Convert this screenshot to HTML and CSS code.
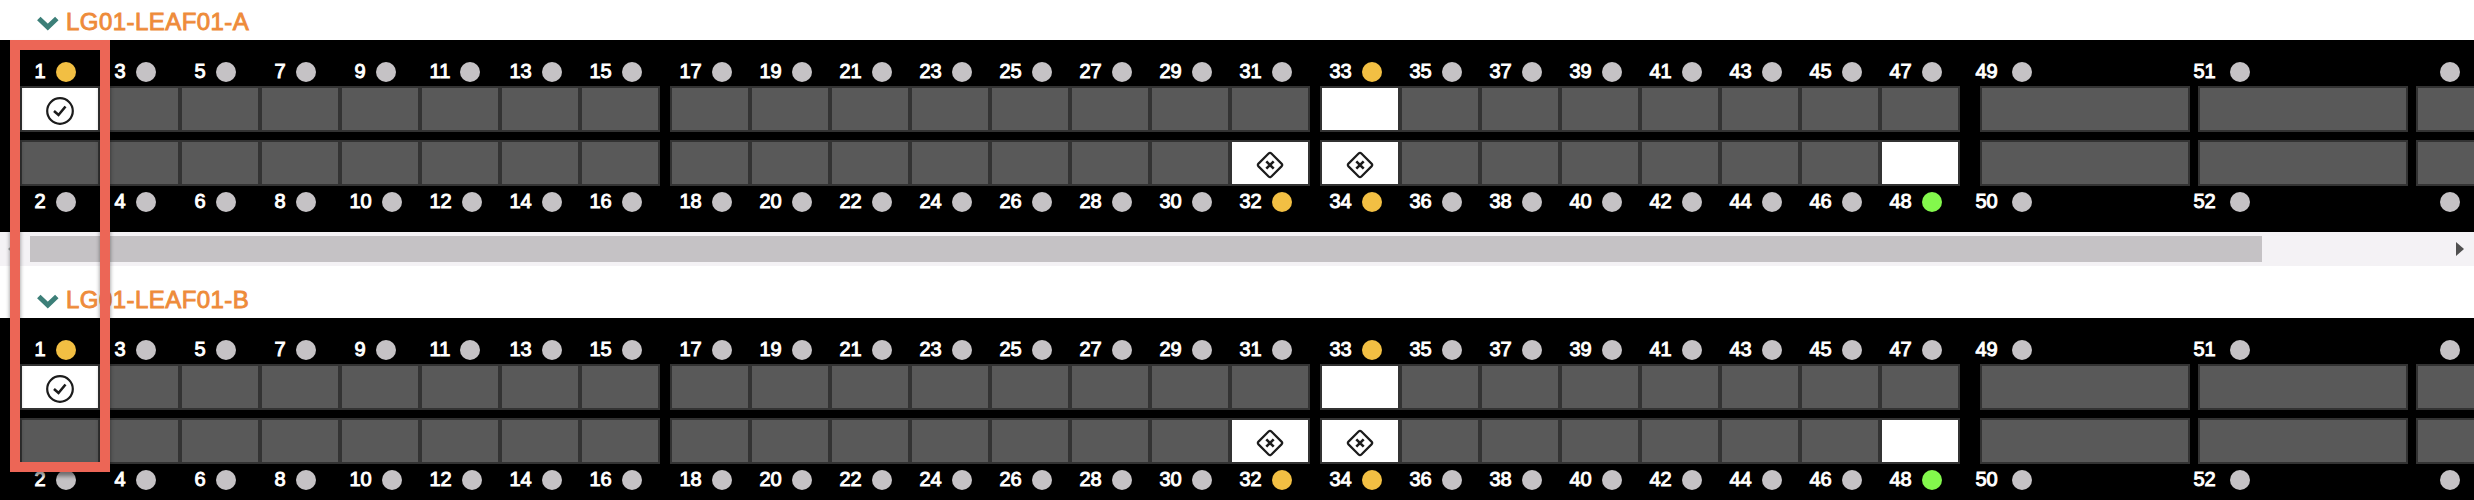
FILE: index.html
```html
<!DOCTYPE html>
<html lang="en">
<head>
<meta charset="utf-8">
<title>Leaf switch ports</title>
<link rel="stylesheet" href="styles.css">
</head>
<body>
<main class="page">
  <section class="switch">
    <header class="switch-title">
      <svg class="chevron" width="22" height="16" viewBox="0 0 22 16"><path d="M1.8 2.5l9 8.5 9-8.5"/></svg>
      <h2 class="switch-name">LG01-LEAF01-A</h2>
    </header>
    <div class="chassis"></div>
    <div class="scrollbar"><i class="arrow-left"></i><div class="thumb"></div><i class="arrow-right"></i></div>
  </section>
  <section class="switch">
    <header class="switch-title">
      <svg class="chevron" width="22" height="16" viewBox="0 0 22 16"><path d="M1.8 2.5l9 8.5 9-8.5"/></svg>
      <h2 class="switch-name">LG01-LEAF01-B</h2>
    </header>
    <div class="chassis"></div>
  </section>
  <div class="highlight"></div>
</main>
<script src="ports.js"></script>
</body>
</html>
```

FILE: styles.css
```css
* { box-sizing: border-box; }
body { margin: 0; background: #fff; font-family: "Liberation Sans", Arial, sans-serif; }
.page { position: relative; width: 2474px; height: 500px; overflow: hidden; }
.switch-title { display: flex; align-items: flex-start; height: 40px; padding: 8px 0 0 37px; }
.switch + .switch .switch-title { height: 52px; padding-top: 20px; }
.chevron { flex: none; margin: 8px 7px 0 0; fill: none; stroke: #3c7f78; stroke-width: 5; }
.switch-name { margin: 0; font-size: 24px; line-height: 28px; font-weight: 400; color: #ee8b3a; letter-spacing: 0.45px; -webkit-text-stroke: 0.9px #ee8b3a; }
.chassis { display: flex; gap: 10px; height: 192px; padding: 22px 0 0 20px; background: #000; overflow: hidden; }
.group { display: flex; flex: none; }
.uplinks { gap: 8px; margin-left: 10px; }
.column { display: grid; flex: none; width: 80px; grid-template-rows: 24px 46px 8px 46px 6px 20px; }
.uplinks .column { width: 210px; }
.label { display: flex; align-items: center; height: 20px; padding-left: 9.5px; color: #fff; font-size: 20px; line-height: 20px; font-weight: 400; -webkit-text-stroke: 1px #fff; }
.number { flex: none; width: 22.5px; margin-right: 10px; margin-top: -2px; }
.single { padding-left: 14.5px; }
.single .number { width: 11.5px; }
.uplinks .label { padding-left: 0; margin-left: -4.5px; }
.uplinks .number { margin-right: 14px; }
.uplinks .unnumbered { margin-left: 24px; }
.led { flex: none; width: 20px; height: 20px; border-radius: 50%; background: #c5c2c5; }
.led-amber { background: #f2bf43; }
.led-green { background: #83f84c; }
.bottom-label { grid-row: 6; }
.cell { display: flex; align-items: center; justify-content: center; border: 2px solid #333; background: #595959; }
.bottom-cell { grid-row: 4; }
.used { background: #fff; }
.icon { margin-top: 4px; fill: none; stroke: #1c1c1c; stroke-width: 2.2; }
.scrollbar { display: flex; align-items: center; height: 34px; padding: 0 10px 0 8px; background: #f4f2f5; }
.thumb { width: 2232px; height: 26px; margin-left: 14px; background: #c5c2c5; }
.arrow-left, .arrow-right { flex: none; width: 8px; height: 14px; background: #505050; }
.arrow-left { clip-path: polygon(50% 25%, 0 50%, 50% 75%); background: #a3a3a3; }
.arrow-right { margin-left: auto; clip-path: polygon(0 0, 100% 50%, 0 100%); }
.highlight { position: absolute; left: 10px; top: 40px; width: 100px; height: 432px; border: 10px solid #ec6656; filter: drop-shadow(0 4px 2px rgba(0, 0, 0, 0.45)); }
```

FILE: ports.js
```javascript
const leds = { 1: "amber", 32: "amber", 33: "amber", 34: "amber", 48: "green" };
const used = { 1: "check", 32: "cross", 33: "", 34: "cross", 48: "" };
const icons = {
  check: '<svg class="icon" width="30" height="30" viewBox="0 0 30 30"><circle cx="15" cy="15" r="12.8"/><path d="M9 15l4.5 4L20.5 10.5" stroke-width="2.6"/></svg>',
  cross: '<svg class="icon" width="30" height="30" viewBox="0 0 30 30"><path d="M13.6 3.5Q15 2.1 16.4 3.5L26.5 13.6Q27.9 15 26.5 16.4L16.4 26.5Q15 27.9 13.6 26.5L3.5 16.4Q2.1 15 3.5 13.6Z"/><path d="M11.3 11.3l7.4 7.4M18.7 11.3l-7.4 7.4" stroke-width="2.6"/></svg>'
};

function label(port, place) {
  const hidden = port > 52;
  const size = hidden ? "unnumbered" : port < 10 ? "single" : "";
  const number = hidden ? "" : `<span class="number"${port === 11 ? ' style="width:20.5px"' : ""}>${port}</span>`;
  const led = leds[port] ? `led-${leds[port]}` : "";
  return `<div class="label ${place}-label ${size}">${number}<i class="led ${led}"></i></div>`;
}

function cell(port, place) {
  const isUsed = port in used;
  return `<div class="cell ${place}-cell ${isUsed ? "used" : ""}">${icons[used[port]] || ""}</div>`;
}

function group(first, last, kind = "") {
  let html = "";
  for (let p = first; p < last; p += 2) {
    html += `<div class="column">${label(p, "top")}${cell(p, "top")}${cell(p + 1, "bottom")}${label(p + 1, "bottom")}</div>`;
  }
  return `<div class="group ${kind}">${html}</div>`;
}

document.querySelectorAll(".chassis").forEach(el => {
  el.innerHTML = group(1, 16) + group(17, 32) + group(33, 48) + group(49, 54, "uplinks");
});
```
